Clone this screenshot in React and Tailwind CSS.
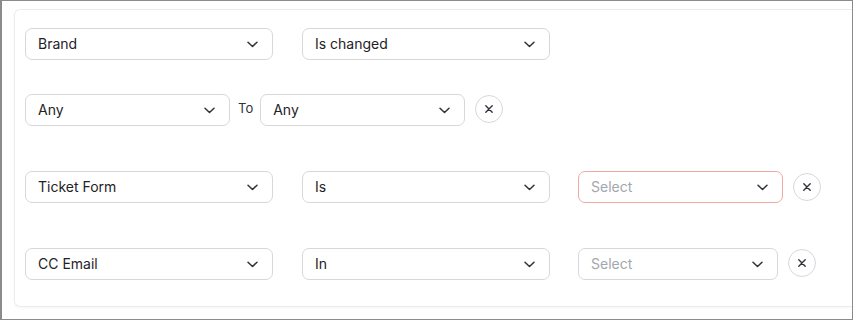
import React from "react";

function Chevron() {
  return (
    <svg width="11" height="7" viewBox="0 0 11 7" fill="none" className="shrink-0">
      <path d="M1 1.2l4.5 4.3L10 1.2" stroke="#2f333a" strokeWidth="1.5" strokeLinecap="round" strokeLinejoin="round" />
    </svg>
  );
}

function Sel({ label, placeholder, w, error }) {
  return (
    <div
      className={`${w} h-[32px] shrink-0 rounded-[7px] border bg-white flex items-center justify-between pl-[12px] pr-[14px] ${
        error ? "border-[#f0a9a2]" : "border-[#d8d8da]"
      }`}
    >
      <span className={`text-[14px] leading-none ${placeholder ? "text-[#a3a7ae]" : "text-[#1f2226]"}`}>
        {label}
      </span>
      <Chevron />
    </div>
  );
}

function XBtn({ cls = "" }) {
  return (
    <div className={`w-[28px] h-[28px] shrink-0 rounded-full border border-[#d8d8da] bg-white flex items-center justify-center ${cls}`}>
      <svg width="10" height="10" viewBox="0 0 10 10" fill="none">
        <path d="M1.8 1.8l6.4 6.4M8.2 1.8l-6.4 6.4" stroke="#2f333a" strokeWidth="1.4" strokeLinecap="round" />
      </svg>
    </div>
  );
}

export default function App() {
  return (
    <div
      className="w-[853px] h-[320px] overflow-hidden bg-white border border-l-2 border-[#8b8b8b] flex"
      style={{ fontFamily: "Inter, 'Noto Sans', sans-serif" }}
    >
      <div className="ml-[12px] mt-[8px] h-[298px] flex-1 rounded-l-[6px] border border-r-0 border-[#ececec] shadow-[0_1px_3px_rgba(0,0,0,0.04)] pt-[18px] pl-[10px] flex flex-col">
        <div className="flex items-start gap-[29px]">
          <Sel label="Brand" w="w-[248px]" />
          <Sel label="Is changed" w="w-[248px]" />
        </div>
        <div className="mt-[34px] flex items-center">
          <Sel label="Any" w="w-[205px]" />
          <span className="ml-[8px] mr-[7px] text-[13px] text-[#2f333a] -mt-[3px]">To</span>
          <Sel label="Any" w="w-[205px]" />
          <XBtn cls="ml-[10px] -mt-[3px]" />
        </div>
        <div className="mt-[45px] flex items-center">
          <Sel label="Ticket Form" w="w-[248px]" />
          <div className="w-[29px]" />
          <Sel label="Is" w="w-[248px]" />
          <div className="w-[28px]" />
          <Sel label="Select" placeholder error w="w-[205px]" />
          <XBtn cls="ml-[10px] -mt-[1px]" />
        </div>
        <div className="mt-[45px] flex items-center">
          <Sel label="CC Email" w="w-[248px]" />
          <div className="w-[29px]" />
          <Sel label="In" w="w-[248px]" />
          <div className="w-[28px]" />
          <Sel label="Select" placeholder w="w-[200px]" />
          <XBtn cls="ml-[10px] -mt-[3px]" />
        </div>
      </div>
    </div>
  );
}
